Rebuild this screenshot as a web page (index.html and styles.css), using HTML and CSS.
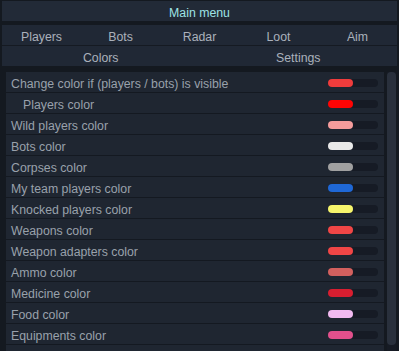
FILE: index.html
```html
<!DOCTYPE html>
<html>
<head>
<meta charset="utf-8">
<link rel="stylesheet" href="styles.css">
</head>
<body>
<div class="window">
  <div class="title">Main menu</div>
  <div class="tabs tabs5">
    <div class="tab">Players</div>
    <div class="tab">Bots</div>
    <div class="tab">Radar</div>
    <div class="tab">Loot</div>
    <div class="tab">Aim</div>
  </div>
  <div class="tabs tabs2">
    <div class="tab">Colors</div>
    <div class="tab">Settings</div>
  </div>
  <div class="content">
    <div class="list">
      <div class="row"><span class="label">Change color if (players / bots) is visible</span><span class="slider"><span class="swatch" style="background:#ef3c3c"></span></span></div>
      <div class="row"><span class="label indent">Players color</span><span class="slider"><span class="swatch" style="background:#ff0404"></span></span></div>
      <div class="row"><span class="label">Wild players color</span><span class="slider"><span class="swatch" style="background:#f59c9c"></span></span></div>
      <div class="row"><span class="label">Bots color</span><span class="slider"><span class="swatch" style="background:#e9e9e9"></span></span></div>
      <div class="row"><span class="label">Corpses color</span><span class="slider"><span class="swatch" style="background:#a0a0a0"></span></span></div>
      <div class="row"><span class="label">My team players color</span><span class="slider"><span class="swatch" style="background:#1f68d6"></span></span></div>
      <div class="row"><span class="label">Knocked players color</span><span class="slider"><span class="swatch" style="background:#f6f56c"></span></span></div>
      <div class="row"><span class="label">Weapons color</span><span class="slider"><span class="swatch" style="background:#f04646"></span></span></div>
      <div class="row"><span class="label">Weapon adapters color</span><span class="slider"><span class="swatch" style="background:#f04646"></span></span></div>
      <div class="row"><span class="label">Ammo color</span><span class="slider"><span class="swatch" style="background:#d2605e"></span></span></div>
      <div class="row"><span class="label">Medicine color</span><span class="slider"><span class="swatch" style="background:#d81e30"></span></span></div>
      <div class="row"><span class="label">Food color</span><span class="slider"><span class="swatch" style="background:#f2baf0"></span></span></div>
      <div class="row"><span class="label">Equipments color</span><span class="slider"><span class="swatch" style="background:#e2508c"></span></span></div>
      <div class="row"></div>
    </div>
    <div class="scrollbar"><div class="thumb"></div></div>
  </div>
</div>
</body>
</html>
```
FILE: styles.css
```css
* { box-sizing: border-box; }
html, body { margin: 0; padding: 0; background: #12161d; }
body {
  font-family: "Liberation Sans", Arial, sans-serif;
  font-size: 12.3px;
}
.window {
  width: 399px;
  height: 351px;
  background: #141920;
  padding: 1px 2px 0 2px;
  display: flex;
  flex-direction: column;
  overflow: hidden;
}
.title {
  height: 20px;
  line-height: 20px;
  padding-top: 2px;
  overflow: hidden;
  background: #222a37;
  color: #9ee3e6;
  text-align: center;
  flex: none;
}
.tabs {
  display: grid;
  height: 21px;
  background: #202835;
  color: #aab1bb;
  flex: none;
  overflow: hidden;
}
.tabs5 {
  grid-template-columns: repeat(5, 1fr);
  margin-top: 4px;
  border-bottom: 1px solid #151a22;
}
.tabs2 {
  grid-template-columns: repeat(2, 1fr);
  height: 20px;
}
.tab {
  text-align: center;
  line-height: 20px;
  padding-top: 2px;
}
.content {
  flex: 1;
  display: flex;
  margin-top: 6px;
  min-height: 0;
}
.list {
  flex: 1;
  margin-left: 4px;
  overflow: hidden;
}
.row {
  height: 21px;
  display: flex;
  align-items: center;
  background: #1f2631;
  border-bottom: 1px solid #141921;
  color: #99a1ab;
  padding-left: 5px;
  padding-top: 2px;
}
.label { flex: 1; white-space: nowrap; padding-top: 2px; }
.indent { padding-left: 12px; }
.slider {
  width: 50px;
  height: 8px;
  margin-right: 6px;
  background: #161b25;
  border-radius: 4px;
  display: flex;
}
.swatch {
  width: 25px;
  height: 8px;
  border-radius: 4px;
}
.scrollbar {
  width: 9px;
  margin-left: 3px;
  margin-right: 1px;
  background: #161b24;
  display: flex;
  padding-bottom: 6px;
}
.thumb {
  flex: 1;
  background: #29303c;
  border-radius: 4px;
}
```
